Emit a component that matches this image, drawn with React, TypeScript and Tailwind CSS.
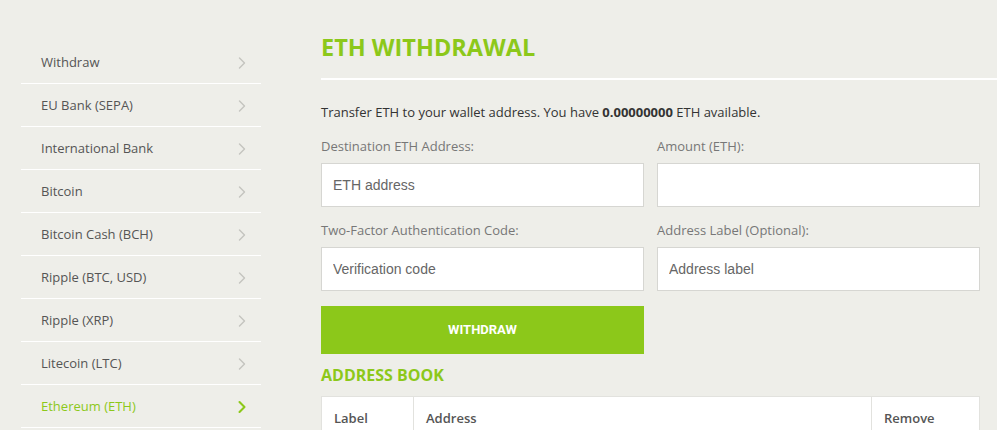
import { ChevronRight } from 'lucide-react';

const MENU = [
  'Withdraw',
  'EU Bank (SEPA)',
  'International Bank',
  'Bitcoin',
  'Bitcoin Cash (BCH)',
  'Ripple (BTC, USD)',
  'Ripple (XRP)',
  'Litecoin (LTC)',
  'Ethereum (ETH)',
];

const ACTIVE = 'Ethereum (ETH)';

function Field({ label, placeholder }: { label: string; placeholder: string }) {
  return (
    <div className="flex flex-col">
      <label className="text-[13px] leading-[18px] text-[#777] mb-[8px]">{label}</label>
      <input
        placeholder={placeholder}
        className="h-[44px] w-full border border-[#d6d6d2] bg-white px-[11px] text-[14px] font-['Liberation_Sans',sans-serif] text-[#555] placeholder:text-[#666] outline-none"
      />
    </div>
  );
}

export default function App() {
  return (
    <div className="min-h-[430px] w-full bg-[#eeeee9] font-['Open_Sans',sans-serif] text-[#444] flex">
      {/* Sidebar */}
      <nav className="ml-[21px] mt-[41px] w-[240px] shrink-0">
        {MENU.map((item) => {
          const active = item === ACTIVE;
          return (
            <div
              key={item}
              className="flex h-[43px] items-center justify-between border-b border-white pl-[20px] pr-[9px] pt-[2px]"
            >
              <span className={`text-[13px] ${active ? 'text-[#8cc81a]' : 'text-[#555]'}`}>{item}</span>
              <ChevronRight
                className={active ? 'text-[#8cc81a]' : 'text-[#c4c4c0]'}
                size={20}
                strokeWidth={active ? 2.5 : 1.75}
              />
            </div>
          );
        })}
      </nav>

      {/* Main */}
      <main className="ml-[60px] mt-[33px] w-[659px]">
        <h1 className="text-[23.5px] font-bold leading-[28px] text-[#8cc81a]">ETH WITHDRAWAL</h1>
        <div className="mt-[17px] h-[2px] bg-white w-[676px]" />

        <p className="mt-[23px] text-[13px] leading-[18px] text-[#333]">
          Transfer ETH to your wallet address. You have <b className="font-bold">0.00000000</b> ETH available.
        </p>

        <div className="mt-[16px] grid grid-cols-2 gap-x-[13px] gap-y-[14px]">
          <Field label="Destination ETH Address:" placeholder="ETH address" />
          <Field label="Amount (ETH):" placeholder="" />
          <Field label="Two-Factor Authentication Code:" placeholder="Verification code" />
          <Field label="Address Label (Optional):" placeholder="Address label" />
        </div>

        <button className="mt-[15px] h-[48px] w-[323px] bg-[#8cc81a] text-white text-[13px] font-bold font-['Roboto',sans-serif]">
          WITHDRAW
        </button>

        <h2 className="mt-[10px] text-[16px] font-bold leading-[22px] text-[#8cc81a]">ADDRESS BOOK</h2>

        <table className="mt-[10px] w-full bg-white border border-[#e2e2de] border-collapse">
          <thead>
            <tr className="h-[44px] text-left text-[13px] text-[#555]">
              <th className="w-[92px] border-r border-[#e2e2de] pl-[12px] pt-[12px] align-top font-semibold">Label</th>
              <th className="border-r border-[#e2e2de] pl-[12px] pt-[12px] align-top font-semibold">Address</th>
              <th className="w-[108px] pl-[12px] pt-[12px] align-top font-semibold">Remove</th>
            </tr>
          </thead>
        </table>
      </main>
    </div>
  );
}
